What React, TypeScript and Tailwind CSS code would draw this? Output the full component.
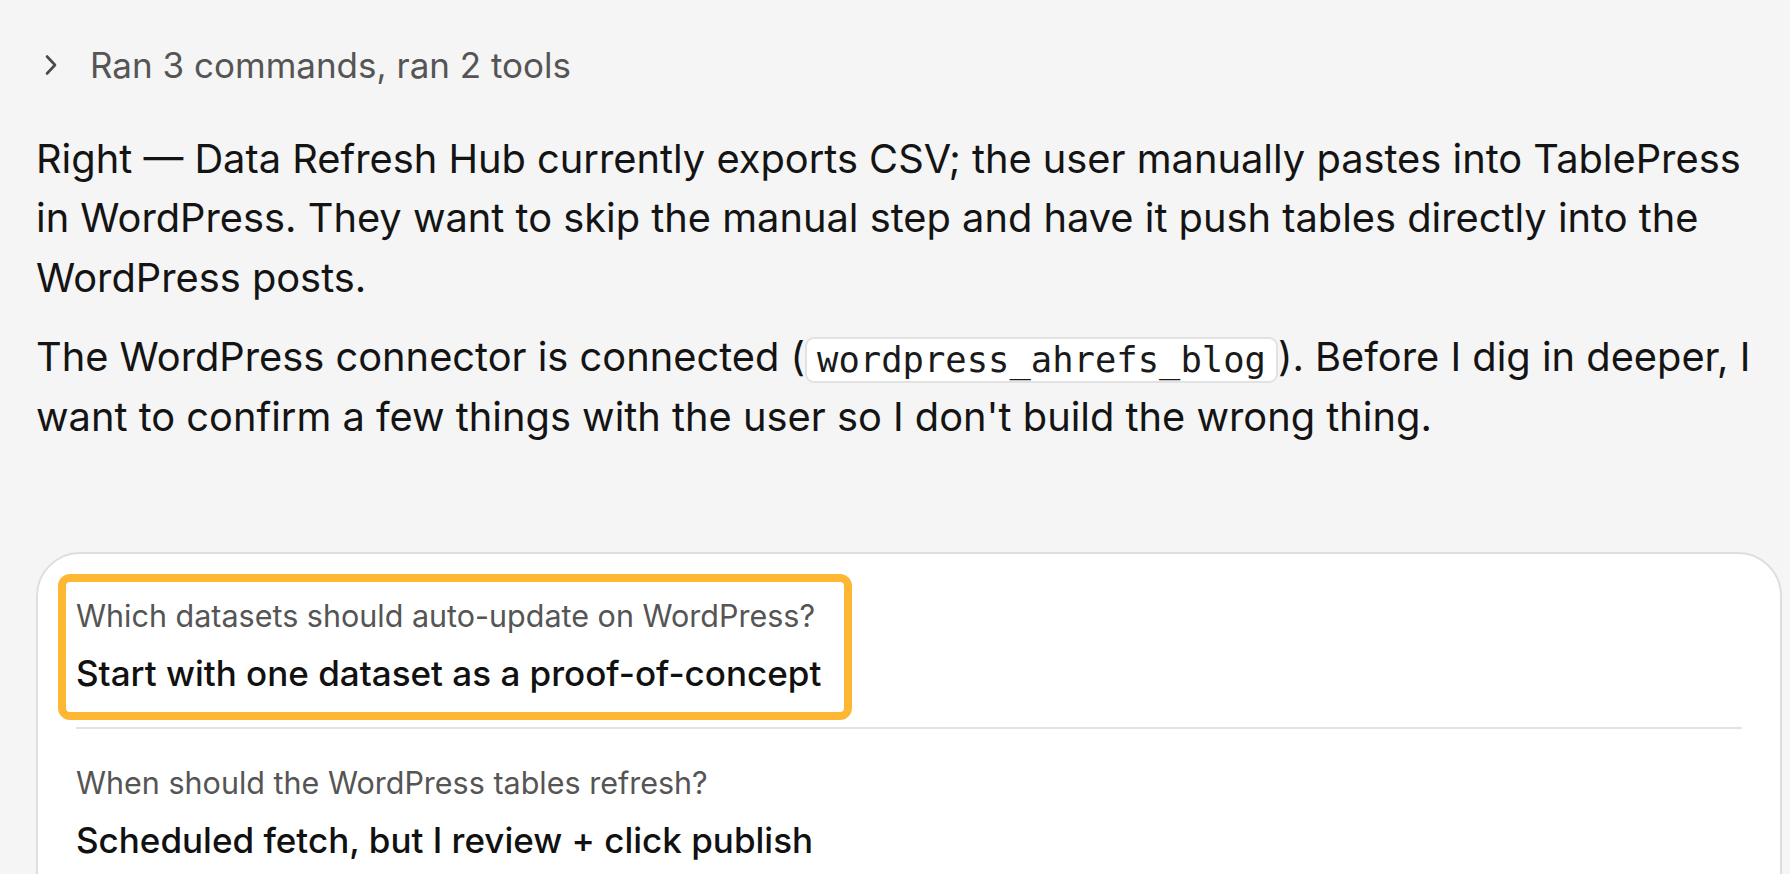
import React from "react";

export default function App() {
  return (
    <div
      className="min-h-screen w-full bg-[#f5f5f5] text-[#141414] overflow-hidden"
      style={{ fontFamily: "Inter, 'Noto Sans', sans-serif" }}
    >
      <div className="pl-[36px] pr-[8px] pt-[41px]">
        <div className="flex items-center h-[48px] text-[35px] text-[#555555]">
          <svg
            width="16"
            height="22"
            viewBox="0 0 16 22"
            className="ml-[7px] mr-[31px]"
            fill="none"
            stroke="#4a4a4a"
            strokeWidth="2.6"
            strokeLinecap="round"
            strokeLinejoin="round"
          >
            <path d="M4 2.5 L12 11 L4 19.5" />
          </svg>
          <span>Ran 3 commands, ran 2 tools</span>
        </div>

        <p className="mt-[40px] text-[39.8px] leading-[59.4px]">
          Right — Data Refresh Hub currently exports CSV; the user manually pastes into TablePress in
          WordPress. They want to skip the manual step and have it push tables directly into the
          WordPress posts.
        </p>
        <p className="mt-[20px] text-[39.8px] leading-[59.4px]">
          The WordPress connector is connected (
          <code
            className="inline-block align-middle bg-white border-2 border-[#e2e2e2] rounded-[9px] px-[10px] h-[46px] leading-[42px] text-[35.5px] text-[#1a1a1a]"
            style={{ fontFamily: "'DejaVu Sans Mono', monospace" }}
          >
            wordpress_ahrefs_blog
          </code>
          ). Before I dig in deeper, I want to confirm a few things with the user so I don't build the
          wrong thing.
        </p>

        <div className="mt-[106px] bg-white border-2 border-[#dedede] rounded-[44px] px-[38px] pt-[10px] pb-[40px] min-h-[400px]">
          <div className="py-[32px]">
            <div className="relative inline-block">
              <div className="absolute -left-[18px] -top-[22px] -right-[31px] -bottom-[25px] border-[8px] border-[#fdb733] rounded-[12px] pointer-events-none" />
              <div className="text-[30.5px] leading-[40px] text-[#555555]">
                Which datasets should auto-update on WordPress?
              </div>
              <div className="mt-[15px] text-[35px] leading-[44px] font-medium text-[#111111]">
                Start with one dataset as a proof-of-concept
              </div>
            </div>
          </div>
          <div className="h-[2px] bg-[#e3e3e3]" />
          <div className="pt-[34px] pb-[32px]">
            <div className="text-[30.5px] leading-[40px] text-[#555555]">
              When should the WordPress tables refresh?
            </div>
            <div className="mt-[15px] text-[35px] leading-[44px] font-medium text-[#111111]">
              Scheduled fetch, but I review + click publish
            </div>
          </div>
        </div>
      </div>
    </div>
  );
}
